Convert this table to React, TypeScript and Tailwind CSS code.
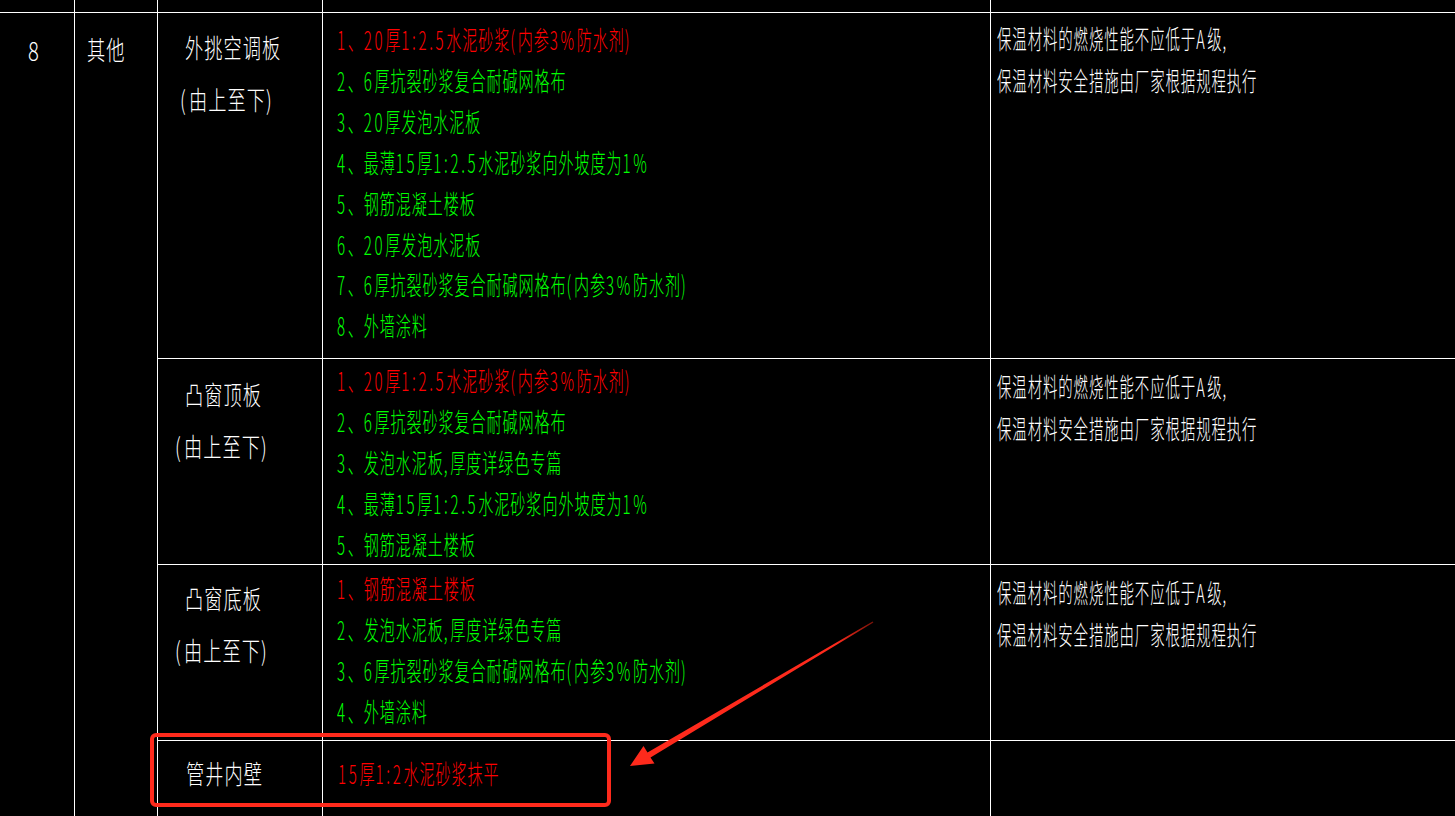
import React from 'react'

const RED = 'text-[#ff0000]'
const GREEN = 'text-[#00ff00]'

// CAD fonts draw digits and latin signs wider than a normal face, so give those runs extra room
function runs(text: string) {
  const out: { s: string; ascii: boolean }[] = []
  for (const ch of text) {
    const ascii = ch.charCodeAt(0) < 128
    const last = out[out.length - 1]
    if (last && last.ascii === ascii) last.s += ch
    else out.push({ s: ch, ascii })
  }
  return out
}

// one line of CAD-style narrow text
function Txt({ text, color = 'text-white', kind }: { text: string; color?: string; kind: 'name' | 'spec' | 'note' }) {
  const box =
    kind === 'name'
      ? 'leading-[52px] tracking-[1.5px]'
      : kind === 'spec'
        ? 'leading-[40.9px] tracking-[1.6px]'
        : 'leading-[41.5px] tracking-[1.6px]'
  const sc = kind === 'name' ? 'scale-x-[0.7]' : kind === 'spec' ? 'scale-x-[0.58]' : 'scale-x-[0.555]'
  return (
    <div className={`whitespace-nowrap text-[26px] ${box} ${color}`}>
      <span className={`inline-block origin-left ${sc}`}>
        {runs(text).map((r, i) =>
          r.ascii ? (
            <span key={i} className="tracking-[4.6px]">
              {r.s}
            </span>
          ) : (
            <React.Fragment key={i}>{r.s}</React.Fragment>
          ),
        )}
      </span>
    </div>
  )
}

const Cell = ({ className = '', children }: { className?: string; children?: React.ReactNode }) => (
  <div className={`bg-black ${className}`}>{children}</div>
)

const NOTE1 = '保温材料的燃烧性能不应低于A级,'
const NOTE2 = '保温材料安全措施由厂家根据规程执行'

export default function App() {
  return (
    <div className="relative h-[816px] w-[1455px] overflow-hidden bg-black font-['Noto_Sans_CJK_SC',sans-serif] font-light">
      <div className="grid h-[880px] grid-cols-[74px_82px_164px_667px_1fr] grid-rows-[12px_345px_205px_175px_1fr] gap-px bg-white">
        {/* top strip */}
        <Cell />
        <Cell />
        <Cell />
        <Cell />
        <Cell />

        <Cell className="row-span-4 pl-[28px] pt-[11px]">
          <div className="text-[26px] leading-[52px] text-white">
            <span className="inline-block origin-left scale-x-[0.78]">8</span>
          </div>
        </Cell>
        <Cell className="row-span-4 pl-[12px] pt-[10px]">
          <Txt kind="name" text="其他" />
        </Cell>

        {/* 外挑空调板 */}
        <Cell className="pl-[27px] pt-[8px]">
          <Txt kind="name" text="外挑空调板" />
          <div className="-ml-[5px]">
            <Txt kind="name" text="(由上至下)" />
          </div>
        </Cell>
        <Cell className="pl-[14px] pt-[6px]">
          <Txt kind="spec" color={RED} text="1、20厚1:2.5水泥砂浆(内参3%防水剂)" />
          <Txt kind="spec" color={GREEN} text="2、6厚抗裂砂浆复合耐碱网格布" />
          <Txt kind="spec" color={GREEN} text="3、20厚发泡水泥板" />
          <Txt kind="spec" color={GREEN} text="4、最薄15厚1:2.5水泥砂浆向外坡度为1%" />
          <Txt kind="spec" color={GREEN} text="5、钢筋混凝土楼板" />
          <Txt kind="spec" color={GREEN} text="6、20厚发泡水泥板" />
          <Txt kind="spec" color={GREEN} text="7、6厚抗裂砂浆复合耐碱网格布(内参3%防水剂)" />
          <Txt kind="spec" color={GREEN} text="8、外墙涂料" />
        </Cell>
        <Cell className="pl-[6px] pt-[4px]">
          <Txt kind="note" text={NOTE1} />
          <Txt kind="note" text={NOTE2} />
        </Cell>

        {/* 凸窗顶板 */}
        <Cell className="pl-[27px] pt-[9px]">
          <div className="leading-[51px]">
            <Txt kind="name" text="凸窗顶板" />
          </div>
          <div className="-ml-[10px]">
            <Txt kind="name" text="(由上至下)" />
          </div>
        </Cell>
        <Cell className="pl-[14px] pt-[1px]">
          <Txt kind="spec" color={RED} text="1、20厚1:2.5水泥砂浆(内参3%防水剂)" />
          <Txt kind="spec" color={GREEN} text="2、6厚抗裂砂浆复合耐碱网格布" />
          <Txt kind="spec" color={GREEN} text="3、发泡水泥板,厚度详绿色专篇" />
          <Txt kind="spec" color={GREEN} text="4、最薄15厚1:2.5水泥砂浆向外坡度为1%" />
          <Txt kind="spec" color={GREEN} text="5、钢筋混凝土楼板" />
        </Cell>
        <Cell className="pl-[6px] pt-[6px]">
          <Txt kind="note" text={NOTE1} />
          <Txt kind="note" text={NOTE2} />
        </Cell>

        {/* 凸窗底板 */}
        <Cell className="pl-[27px] pt-[7px]">
          <Txt kind="name" text="凸窗底板" />
          <div className="-ml-[10px]">
            <Txt kind="name" text="(由上至下)" />
          </div>
        </Cell>
        <Cell className="pl-[14px] pt-[3px]">
          <Txt kind="spec" color={RED} text="1、钢筋混凝土楼板" />
          <Txt kind="spec" color={GREEN} text="2、发泡水泥板,厚度详绿色专篇" />
          <Txt kind="spec" color={GREEN} text="3、6厚抗裂砂浆复合耐碱网格布(内参3%防水剂)" />
          <Txt kind="spec" color={GREEN} text="4、外墙涂料" />
        </Cell>
        <Cell className="pl-[6px] pt-[6px]">
          <Txt kind="note" text={NOTE1} />
          <Txt kind="note" text={NOTE2} />
        </Cell>

        {/* 管井内壁 */}
        <Cell className="pl-[28px] pt-[6px]">
          <Txt kind="name" text="管井内壁" />
        </Cell>
        <Cell className="pl-[15px] pt-[12px]">
          <Txt kind="spec" color={RED} text="15厚1:2水泥砂浆抹平" />
        </Cell>
        <Cell />
      </div>

      {/* annotation: highlight box + arrow */}
      <div className="pointer-events-none absolute left-[150px] top-[733px] h-[74px] w-[461px] rounded-[6px] border-[4px] border-[#fe2a1c]" />
      <svg className="pointer-events-none absolute left-0 top-0" width="1455" height="816" viewBox="0 0 1455 816">
        <defs>
          <linearGradient id="tail" x1="630" y1="766" x2="873" y2="622" gradientUnits="userSpaceOnUse">
            <stop offset="0" stopColor="#fe2a1c" />
            <stop offset="0.85" stopColor="#fe2a1c" />
            <stop offset="1" stopColor="#7a1208" />
          </linearGradient>
        </defs>
        <polygon
          points="630,766 643.5,746 647.5,752.5 872.6,621.4 873.4,622.6 650.5,757.6 654.5,763.5"
          fill="url(#tail)"
        />
      </svg>
    </div>
  )
}
